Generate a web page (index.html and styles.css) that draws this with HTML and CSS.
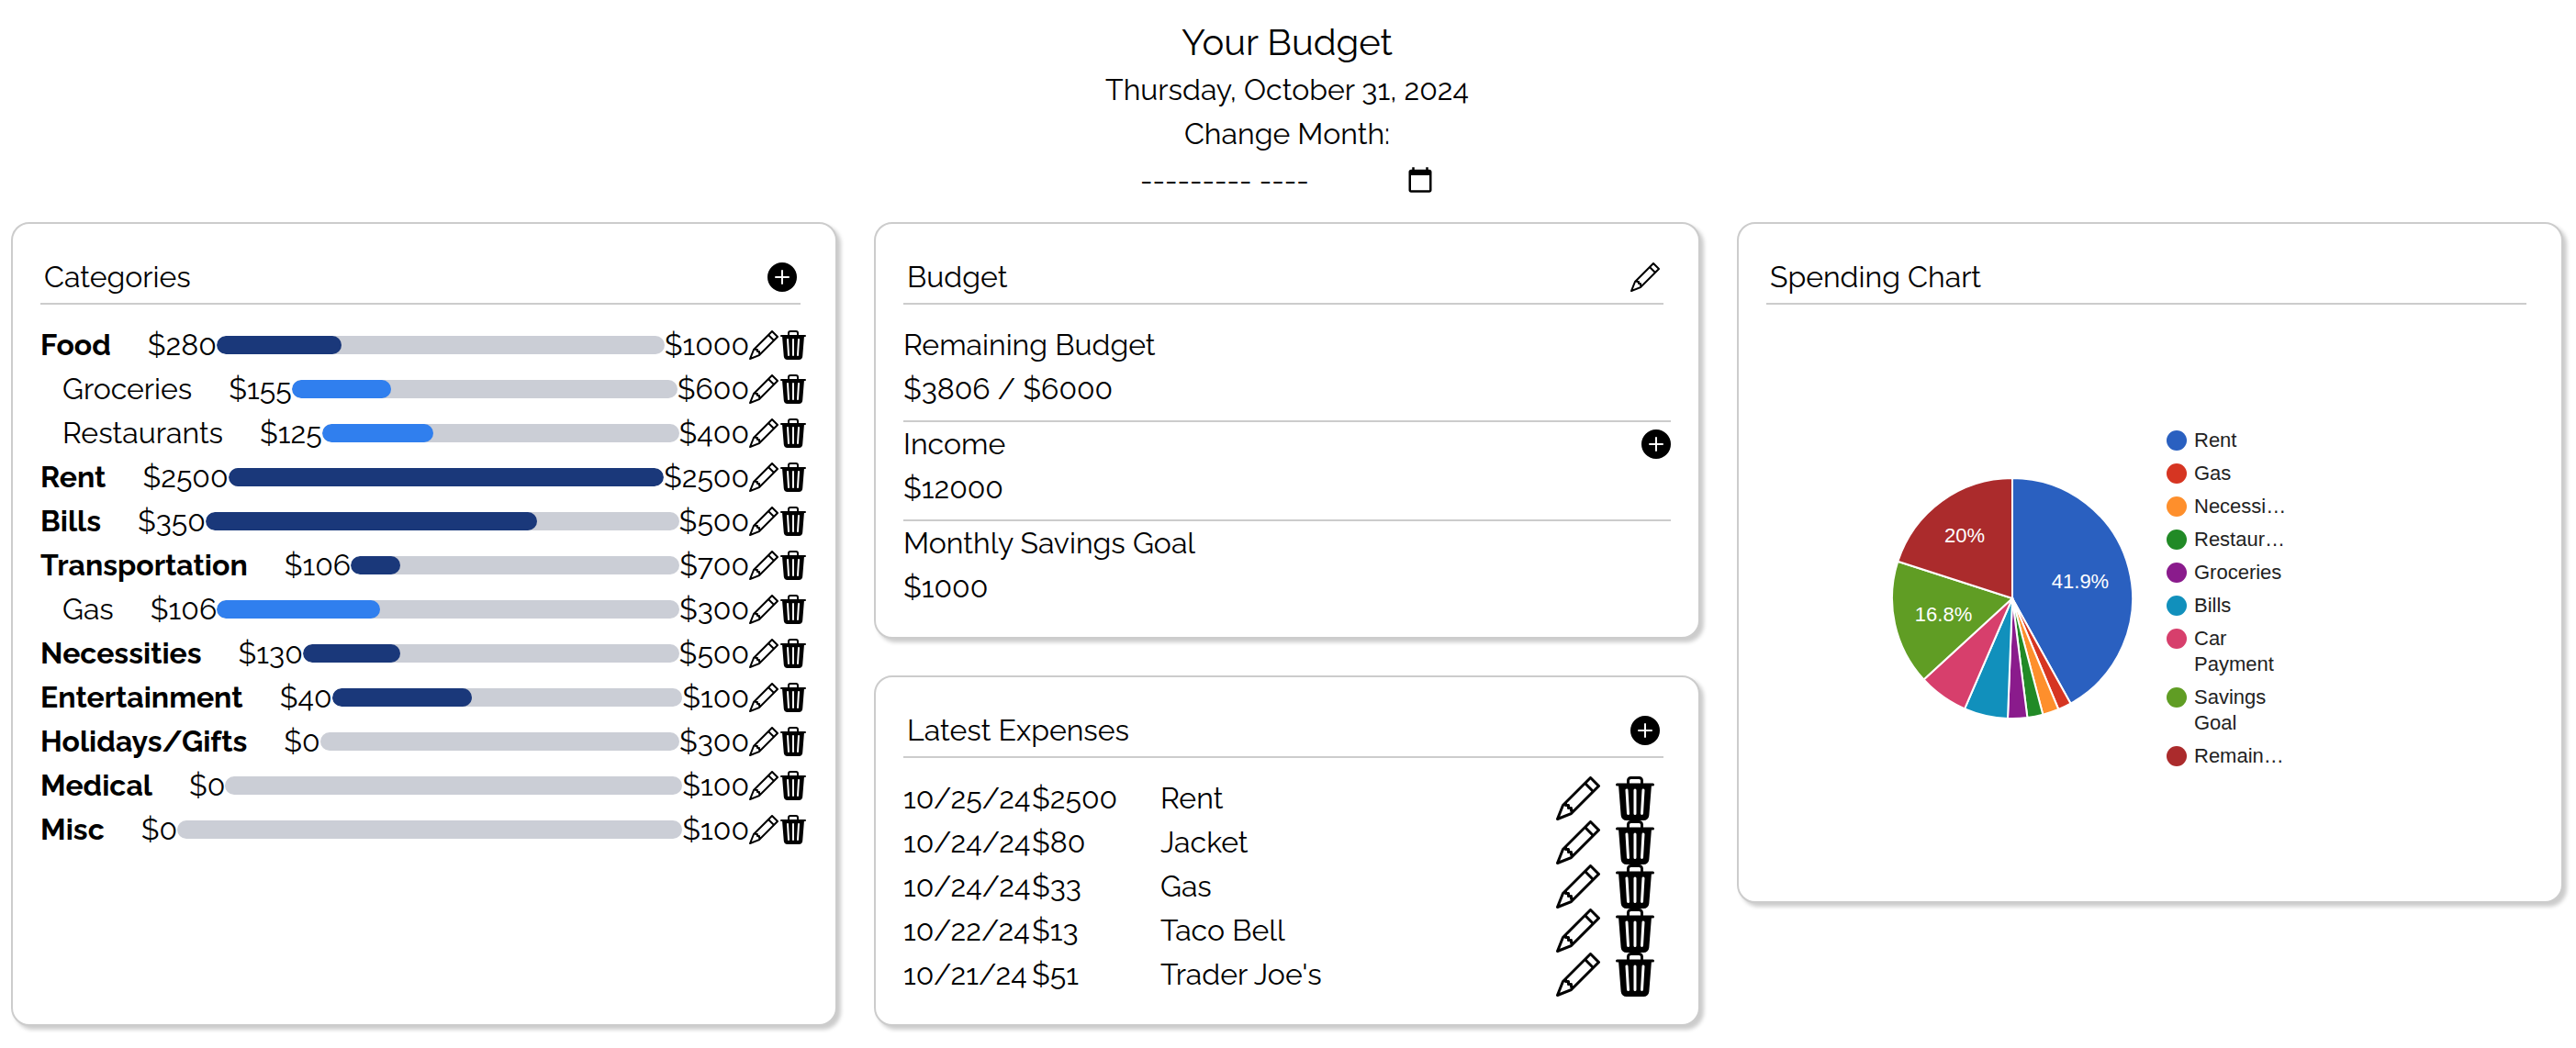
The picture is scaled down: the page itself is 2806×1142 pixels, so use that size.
FILE: index.html
```
<!DOCTYPE html>
<html lang="en">
<head>
<meta charset="utf-8">
<meta name="viewport" content="width=device-width, initial-scale=1">
<title>Your Budget</title>
<link rel="stylesheet" href="styles.css">
</head>
<body>
<svg class="sprite" aria-hidden="true">
  <symbol id="plus" viewBox="0 0 16 16"><path d="M16 8A8 8 0 1 1 0 8a8 8 0 0 1 16 0M8.5 4.5a.5.5 0 0 0-1 0v3h-3a.5.5 0 0 0 0 1h3v3a.5.5 0 0 0 1 0v-3h3a.5.5 0 0 0 0-1h-3z"/></symbol>
  <symbol id="pencil" viewBox="0 0 16 16"><path d="M12.146.146a.5.5 0 0 1 .708 0l3 3a.5.5 0 0 1 0 .708l-10 10a.5.5 0 0 1-.168.11l-5 2a.5.5 0 0 1-.65-.65l2-5a.5.5 0 0 1 .11-.168zM11.207 2.5 13.5 4.793 14.793 3.5 12.5 1.207zm1.586 3L10.5 3.207 4 9.707V10h.5a.5.5 0 0 1 .5.5v.5h.5a.5.5 0 0 1 .5.5v.5h.293zm-9.761 5.175-.106.106-1.528 3.821 3.821-1.528.106-.106A.5.5 0 0 1 5 12.5V12h-.5a.5.5 0 0 1-.5-.5V11h-.5a.5.5 0 0 1-.468-.325"/></symbol>
  <symbol id="calendar" viewBox="0 0 24 24"><path d="M20 3h-1V1h-2v2H7V1H5v2H4c-1.1 0-2 .9-2 2v16c0 1.1.9 2 2 2h16c1.1 0 2-.9 2-2V5c0-1.1-.9-2-2-2zm0 18H4V8h16v13z"/></symbol>
  <symbol id="trash" viewBox="0 0 16 16"><path d="M11 1.5v1h3.5a.5.5 0 0 1 0 1h-.538l-.853 10.66A2 2 0 0 1 11.115 16h-6.23a2 2 0 0 1-1.994-1.84L2.038 3.5H1.5a.5.5 0 0 1 0-1H5v-1A1.5 1.5 0 0 1 6.5 0h3A1.5 1.5 0 0 1 11 1.5m-5 0v1h4v-1a.5.5 0 0 0-.5-.5h-3a.5.5 0 0 0-.5.5M4.5 5.029l.5 8.5a.5.5 0 1 0 .998-.06l-.5-8.5a.5.5 0 1 0-.998.06m6.53-.528a.5.5 0 0 0-.528.47l-.5 8.5a.5.5 0 0 0 .998.058l.5-8.5a.5.5 0 0 0-.47-.528M8 4.5a.5.5 0 0 0-.5.5v8.5a.5.5 0 0 0 1 0V5a.5.5 0 0 0-.5-.5"/></symbol>
</svg>

<header class="page-header">
  <h1 class="page-title">Your Budget</h1>
  <p class="today">Thursday, October 31, 2024</p>
  <label class="month-label" for="month">Change Month:</label>
  <div class="month-picker">
    <input class="month-input" type="text" id="month" placeholder="--------- ----">
    <button class="icon-button" type="button" aria-label="Open month picker"><svg class="icon calendar"><use href="#calendar"/></svg></button>
  </div>
</header>

<main class="board">
  <section class="card">
    <div class="card-header">
      <h2 class="card-title">Categories</h2>
      <button class="icon-button" type="button" aria-label="Add category"><svg class="icon"><use href="#plus"/></svg></button>
    </div>
    <ul class="categories">
      <li class="category"><span class="name">Food</span><span>$280</span><div class="bar"><div class="fill" style="width:28%"></div></div><span>$1000</span><button class="icon-button" type="button" aria-label="Edit Food"><svg class="icon"><use href="#pencil"/></svg></button><button class="icon-button" type="button" aria-label="Delete Food"><svg class="icon"><use href="#trash"/></svg></button></li>
      <li class="category sub"><span class="name">Groceries</span><span>$155</span><div class="bar"><div class="fill" style="width:25.83%"></div></div><span>$600</span><button class="icon-button" type="button" aria-label="Edit Groceries"><svg class="icon"><use href="#pencil"/></svg></button><button class="icon-button" type="button" aria-label="Delete Groceries"><svg class="icon"><use href="#trash"/></svg></button></li>
      <li class="category sub"><span class="name">Restaurants</span><span>$125</span><div class="bar"><div class="fill" style="width:31.25%"></div></div><span>$400</span><button class="icon-button" type="button" aria-label="Edit Restaurants"><svg class="icon"><use href="#pencil"/></svg></button><button class="icon-button" type="button" aria-label="Delete Restaurants"><svg class="icon"><use href="#trash"/></svg></button></li>
      <li class="category"><span class="name">Rent</span><span>$2500</span><div class="bar"><div class="fill" style="width:100%"></div></div><span>$2500</span><button class="icon-button" type="button" aria-label="Edit Rent"><svg class="icon"><use href="#pencil"/></svg></button><button class="icon-button" type="button" aria-label="Delete Rent"><svg class="icon"><use href="#trash"/></svg></button></li>
      <li class="category"><span class="name">Bills</span><span>$350</span><div class="bar"><div class="fill" style="width:70%"></div></div><span>$500</span><button class="icon-button" type="button" aria-label="Edit Bills"><svg class="icon"><use href="#pencil"/></svg></button><button class="icon-button" type="button" aria-label="Delete Bills"><svg class="icon"><use href="#trash"/></svg></button></li>
      <li class="category"><span class="name">Transportation</span><span>$106</span><div class="bar"><div class="fill" style="width:15.14%"></div></div><span>$700</span><button class="icon-button" type="button" aria-label="Edit Transportation"><svg class="icon"><use href="#pencil"/></svg></button><button class="icon-button" type="button" aria-label="Delete Transportation"><svg class="icon"><use href="#trash"/></svg></button></li>
      <li class="category sub"><span class="name">Gas</span><span>$106</span><div class="bar"><div class="fill" style="width:35.33%"></div></div><span>$300</span><button class="icon-button" type="button" aria-label="Edit Gas"><svg class="icon"><use href="#pencil"/></svg></button><button class="icon-button" type="button" aria-label="Delete Gas"><svg class="icon"><use href="#trash"/></svg></button></li>
      <li class="category"><span class="name">Necessities</span><span>$130</span><div class="bar"><div class="fill" style="width:26%"></div></div><span>$500</span><button class="icon-button" type="button" aria-label="Edit Necessities"><svg class="icon"><use href="#pencil"/></svg></button><button class="icon-button" type="button" aria-label="Delete Necessities"><svg class="icon"><use href="#trash"/></svg></button></li>
      <li class="category"><span class="name">Entertainment</span><span>$40</span><div class="bar"><div class="fill" style="width:40%"></div></div><span>$100</span><button class="icon-button" type="button" aria-label="Edit Entertainment"><svg class="icon"><use href="#pencil"/></svg></button><button class="icon-button" type="button" aria-label="Delete Entertainment"><svg class="icon"><use href="#trash"/></svg></button></li>
      <li class="category"><span class="name">Holidays/Gifts</span><span>$0</span><div class="bar"><div class="fill" style="width:0%"></div></div><span>$300</span><button class="icon-button" type="button" aria-label="Edit Holidays/Gifts"><svg class="icon"><use href="#pencil"/></svg></button><button class="icon-button" type="button" aria-label="Delete Holidays/Gifts"><svg class="icon"><use href="#trash"/></svg></button></li>
      <li class="category"><span class="name">Medical</span><span>$0</span><div class="bar"><div class="fill" style="width:0%"></div></div><span>$100</span><button class="icon-button" type="button" aria-label="Edit Medical"><svg class="icon"><use href="#pencil"/></svg></button><button class="icon-button" type="button" aria-label="Delete Medical"><svg class="icon"><use href="#trash"/></svg></button></li>
      <li class="category"><span class="name">Misc</span><span>$0</span><div class="bar"><div class="fill" style="width:0%"></div></div><span>$100</span><button class="icon-button" type="button" aria-label="Edit Misc"><svg class="icon"><use href="#pencil"/></svg></button><button class="icon-button" type="button" aria-label="Delete Misc"><svg class="icon"><use href="#trash"/></svg></button></li>
    </ul>
  </section>

  <div class="column">
    <section class="card">
      <div class="card-header">
        <h2 class="card-title">Budget</h2>
        <button class="icon-button" type="button" aria-label="Edit budget"><svg class="icon"><use href="#pencil"/></svg></button>
      </div>
      <div class="figure-group">
        <h3 class="figure-label">Remaining Budget</h3>
        <p>$3806 / $6000</p>
      </div>
      <div class="figure-group">
        <div class="figure-row">
          <h3 class="figure-label">Income</h3>
          <button class="icon-button" type="button" aria-label="Add income"><svg class="icon"><use href="#plus"/></svg></button>
        </div>
        <p>$12000</p>
      </div>
      <div class="figure-group">
        <h3 class="figure-label">Monthly Savings Goal</h3>
        <p>$1000</p>
      </div>
    </section>

    <section class="card">
      <div class="card-header">
        <h2 class="card-title">Latest Expenses</h2>
        <button class="icon-button" type="button" aria-label="Add expense"><svg class="icon"><use href="#plus"/></svg></button>
      </div>
      <table class="expenses">
        <colgroup><col class="col-date"><col class="col-amount"><col><col class="col-action"><col class="col-action"></colgroup>
        <tbody>
          <tr><td>10/25/24</td><td>$2500</td><td>Rent</td><td class="action"><button class="icon-button" type="button" aria-label="Edit Rent expense"><svg class="icon large"><use href="#pencil"/></svg></button></td><td class="action"><button class="icon-button" type="button" aria-label="Delete Rent expense"><svg class="icon large"><use href="#trash"/></svg></button></td></tr>
          <tr><td>10/24/24</td><td>$80</td><td>Jacket</td><td class="action"><button class="icon-button" type="button" aria-label="Edit Jacket expense"><svg class="icon large"><use href="#pencil"/></svg></button></td><td class="action"><button class="icon-button" type="button" aria-label="Delete Jacket expense"><svg class="icon large"><use href="#trash"/></svg></button></td></tr>
          <tr><td>10/24/24</td><td>$33</td><td>Gas</td><td class="action"><button class="icon-button" type="button" aria-label="Edit Gas expense"><svg class="icon large"><use href="#pencil"/></svg></button></td><td class="action"><button class="icon-button" type="button" aria-label="Delete Gas expense"><svg class="icon large"><use href="#trash"/></svg></button></td></tr>
          <tr><td>10/22/24</td><td>$13</td><td>Taco Bell</td><td class="action"><button class="icon-button" type="button" aria-label="Edit Taco Bell expense"><svg class="icon large"><use href="#pencil"/></svg></button></td><td class="action"><button class="icon-button" type="button" aria-label="Delete Taco Bell expense"><svg class="icon large"><use href="#trash"/></svg></button></td></tr>
          <tr><td>10/21/24</td><td>$51</td><td>Trader Joe's</td><td class="action"><button class="icon-button" type="button" aria-label="Edit Trader Joe's expense"><svg class="icon large"><use href="#pencil"/></svg></button></td><td class="action"><button class="icon-button" type="button" aria-label="Delete Trader Joe's expense"><svg class="icon large"><use href="#trash"/></svg></button></td></tr>
        </tbody>
      </table>
    </section>
  </div>

  <section class="card chart-card">
    <div class="card-header">
      <h2 class="card-title">Spending Chart</h2>
    </div>
    <div class="chart">
      <svg class="pie" viewBox="-132 -132 264 264" role="img" aria-label="Spending by category">
        <g class="slices">
          <path class="rent" d="M0 0V-131A131 131 0 0 1 63.5 114.6Z"/>
          <path class="gas" d="M0 0L63.5 114.6A131 131 0 0 1 50.3 121Z"/>
          <path class="necessities" d="M0 0L50.3 121A131 131 0 0 1 33.3 126.7Z"/>
          <path class="restaurants" d="M0 0L33.3 126.7A131 131 0 0 1 16.4 130Z"/>
          <path class="groceries" d="M0 0L16.4 130A131 131 0 0 1 -5 130.9Z"/>
          <path class="bills" d="M0 0L-5 130.9A131 131 0 0 1 -51.9 120.3Z"/>
          <path class="car" d="M0 0L-51.9 120.3A131 131 0 0 1 -96.5 88.5Z"/>
          <path class="savings" d="M0 0L-96.5 88.5A131 131 0 0 1 -124.7 -40.2Z"/>
          <path class="remaining" d="M0 0L-124.7 -40.2A131 131 0 0 1 0 -131Z"/>
        </g>
        <text class="share" x="74" y="-11">41.9%</text>
        <text class="share" x="-75" y="25">16.8%</text>
        <text class="share" x="-52" y="-61">20%</text>
      </svg>
      <ul class="legend">
        <li class="legend-item"><span class="dot rent"></span><span class="legend-text">Rent</span></li>
        <li class="legend-item"><span class="dot gas"></span><span class="legend-text">Gas</span></li>
        <li class="legend-item"><span class="dot necessities"></span><span class="legend-text">Necessi…</span></li>
        <li class="legend-item"><span class="dot restaurants"></span><span class="legend-text">Restaur…</span></li>
        <li class="legend-item"><span class="dot groceries"></span><span class="legend-text">Groceries</span></li>
        <li class="legend-item"><span class="dot bills"></span><span class="legend-text">Bills</span></li>
        <li class="legend-item"><span class="dot car"></span><span class="legend-text">Car Payment</span></li>
        <li class="legend-item"><span class="dot savings"></span><span class="legend-text">Savings Goal</span></li>
        <li class="legend-item"><span class="dot remaining"></span><span class="legend-text">Remain…</span></li>
      </ul>
    </div>
  </section>
</main>
</body>
</html>
```
FILE: styles.css
```
*, *::before, *::after { box-sizing: border-box; }

body {
  margin: 0;
  padding: 18px 14px 24px 12px;
  background: #fff;
  color: #000;
  font-family: Raleway, Lato, sans-serif;
  font-size: 32px;
  line-height: 48px;
}

h1, h2, h3, p, ul { margin: 0; padding: 0; font-weight: 400; }
ul { list-style: none; }

.sprite { display: none; }

.page-header {
  display: flex;
  flex-direction: column;
  align-items: center;
  margin-bottom: 20px;
}
.page-title { font-size: 40px; line-height: 56px; }

.month-picker {
  display: flex;
  align-items: center;
  width: 320px;
  height: 52px;
}
.month-input {
  flex: 1;
  min-width: 0;
  height: 52px;
  padding: 0;
  border: 0;
  background: transparent;
  color: inherit;
  font: inherit;
}
.month-input::placeholder { color: #000; opacity: 1; }

.board {
  display: grid;
  grid-template-columns: repeat(3, minmax(0, 1fr));
  gap: 40px;
}
.column { display: flex; flex-direction: column; gap: 40px; }

.card {
  padding: 30px;
  border: 2px solid #ccc;
  border-radius: 20px;
  background: #fff;
  box-shadow: 4px 4px 4px #ccc;
}
.chart-card { align-self: start; }

.card-header {
  display: flex;
  align-items: center;
  justify-content: space-between;
  margin: 0 8px 20px 0;
  padding: 4px;
  border-bottom: 2px solid #ccc;
}
.card-title, .figure-label { font-size: 32px; line-height: 48px; }

.icon-button {
  flex: none;
  display: block;
  padding: 0;
  border: 0;
  background: none;
  color: inherit;
  cursor: pointer;
}
.icon { display: block; width: 32px; height: 32px; fill: currentColor; }
.icon.large { width: 48px; height: 48px; }
.icon.calendar { width: 30px; height: 30px; }

.category { display: flex; align-items: center; }
.name { margin-right: 40px; font-weight: 700; }
.sub { padding-left: 24px; }
.sub .name { font-weight: 400; }

.bar {
  flex: 1;
  height: 20px;
  border-radius: 10px;
  background: #cbced6;
  overflow: hidden;
}
.fill { height: 100%; border-radius: 10px; background: #1a387a; }
.sub .fill { background: #307fee; }

.figure-group + .figure-group { margin-top: 10px; border-top: 2px solid #ccc; }
.figure-row { display: flex; align-items: center; justify-content: space-between; }

.expenses { width: 99%; table-layout: fixed; border-collapse: collapse; }
.expenses td { padding: 0; white-space: nowrap; }
.col-date, .col-amount { width: 140px; }
.col-action { width: 62px; }
.action .icon-button { margin: 0 auto; }

.chart {
  display: flex;
  align-items: center;
  gap: 36px;
  min-height: 600px;
  padding-left: 136px;
}
.pie { flex: none; width: 264px; height: 264px; }
.slices path { stroke: #fff; stroke-width: 2px; }
.share {
  fill: #fff;
  font: 22px/28px "Liberation Sans", Arial, sans-serif;
  text-anchor: middle;
}

.legend {
  display: grid;
  gap: 8px;
  width: 140px;
  color: #222;
  font: 22px/28px "Liberation Sans", Arial, sans-serif;
}
.legend-item { display: flex; gap: 8px; }
.dot { flex: none; width: 22px; height: 22px; margin-top: 3px; border-radius: 50%; }

.rent { fill: #2a60c0; background: #2a60c0; }
.gas { fill: #d63522; background: #d63522; }
.necessities { fill: #fe8f2c; background: #fe8f2c; }
.restaurants { fill: #218a26; background: #218a26; }
.groceries { fill: #8a1b8c; background: #8a1b8c; }
.bills { fill: #1190bc; background: #1190bc; }
.car { fill: #d73f6c; background: #d73f6c; }
.savings { fill: #609d24; background: #609d24; }
.remaining { fill: #ab2b2c; background: #ab2b2c; }
```
